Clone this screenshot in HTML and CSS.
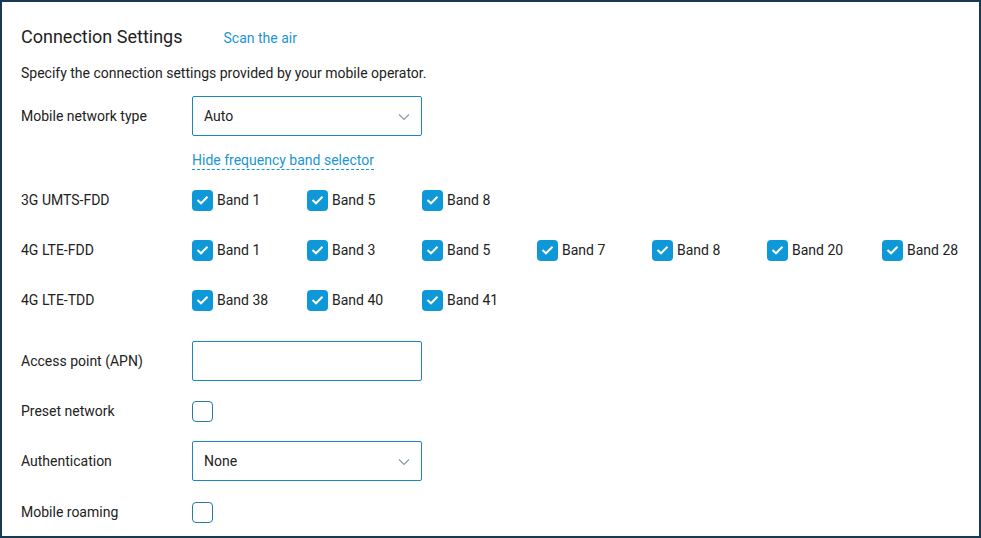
FILE: index.html
```html
<!DOCTYPE html>
<html>
<head>
<meta charset="utf-8">
<link rel="stylesheet" href="styles.css">
</head>
<body>
<div class="panel">
  <div class="header">
    <h1 class="title">Connection Settings</h1>
    <a class="scan">Scan the air</a>
  </div>
  <p class="desc">Specify the connection settings provided by your mobile operator.</p>

  <div class="row first">
    <div class="label">Mobile network type</div>
    <div class="select"><span>Auto</span>
      <svg class="chev" width="12" height="8" viewBox="0 0 12 8"><path d="M1 1.5 L6 6.5 L11 1.5" fill="none" stroke="#8a99a6" stroke-width="1.2"/></svg>
    </div>
  </div>

  <div class="linkrow"><a class="dashlink">Hide frequency band selector</a></div>

  <div class="bands">
    <div class="bandrow">
      <div class="label">3G UMTS-FDD</div>
      <div class="checks">
        <label class="chk"><span class="box on"><svg width="13" height="10" viewBox="0 0 13 10"><path d="M1.5 5 L5 8.3 L11.5 1.7" fill="none" stroke="#fff" stroke-width="2"/></svg></span>Band 1</label>
        <label class="chk"><span class="box on"><svg width="13" height="10" viewBox="0 0 13 10"><path d="M1.5 5 L5 8.3 L11.5 1.7" fill="none" stroke="#fff" stroke-width="2"/></svg></span>Band 5</label>
        <label class="chk"><span class="box on"><svg width="13" height="10" viewBox="0 0 13 10"><path d="M1.5 5 L5 8.3 L11.5 1.7" fill="none" stroke="#fff" stroke-width="2"/></svg></span>Band 8</label>
      </div>
    </div>
    <div class="bandrow">
      <div class="label">4G LTE-FDD</div>
      <div class="checks">
        <label class="chk"><span class="box on"><svg width="13" height="10" viewBox="0 0 13 10"><path d="M1.5 5 L5 8.3 L11.5 1.7" fill="none" stroke="#fff" stroke-width="2"/></svg></span>Band 1</label>
        <label class="chk"><span class="box on"><svg width="13" height="10" viewBox="0 0 13 10"><path d="M1.5 5 L5 8.3 L11.5 1.7" fill="none" stroke="#fff" stroke-width="2"/></svg></span>Band 3</label>
        <label class="chk"><span class="box on"><svg width="13" height="10" viewBox="0 0 13 10"><path d="M1.5 5 L5 8.3 L11.5 1.7" fill="none" stroke="#fff" stroke-width="2"/></svg></span>Band 5</label>
        <label class="chk"><span class="box on"><svg width="13" height="10" viewBox="0 0 13 10"><path d="M1.5 5 L5 8.3 L11.5 1.7" fill="none" stroke="#fff" stroke-width="2"/></svg></span>Band 7</label>
        <label class="chk"><span class="box on"><svg width="13" height="10" viewBox="0 0 13 10"><path d="M1.5 5 L5 8.3 L11.5 1.7" fill="none" stroke="#fff" stroke-width="2"/></svg></span>Band 8</label>
        <label class="chk"><span class="box on"><svg width="13" height="10" viewBox="0 0 13 10"><path d="M1.5 5 L5 8.3 L11.5 1.7" fill="none" stroke="#fff" stroke-width="2"/></svg></span>Band 20</label>
        <label class="chk"><span class="box on"><svg width="13" height="10" viewBox="0 0 13 10"><path d="M1.5 5 L5 8.3 L11.5 1.7" fill="none" stroke="#fff" stroke-width="2"/></svg></span>Band 28</label>
      </div>
    </div>
    <div class="bandrow">
      <div class="label">4G LTE-TDD</div>
      <div class="checks">
        <label class="chk"><span class="box on"><svg width="13" height="10" viewBox="0 0 13 10"><path d="M1.5 5 L5 8.3 L11.5 1.7" fill="none" stroke="#fff" stroke-width="2"/></svg></span>Band 38</label>
        <label class="chk"><span class="box on"><svg width="13" height="10" viewBox="0 0 13 10"><path d="M1.5 5 L5 8.3 L11.5 1.7" fill="none" stroke="#fff" stroke-width="2"/></svg></span>Band 40</label>
        <label class="chk"><span class="box on"><svg width="13" height="10" viewBox="0 0 13 10"><path d="M1.5 5 L5 8.3 L11.5 1.7" fill="none" stroke="#fff" stroke-width="2"/></svg></span>Band 41</label>
      </div>
    </div>
  </div>

  <div class="rows">
    <div class="row">
      <div class="label">Access point (APN)</div>
      <div class="input"></div>
    </div>
    <div class="row">
      <div class="label">Preset network</div>
      <span class="box off"></span>
    </div>
    <div class="row">
      <div class="label">Authentication</div>
      <div class="select"><span>None</span>
        <svg class="chev" width="12" height="8" viewBox="0 0 12 8"><path d="M1 1.5 L6 6.5 L11 1.5" fill="none" stroke="#8a99a6" stroke-width="1.2"/></svg>
      </div>
    </div>
    <div class="row last">
      <div class="label">Mobile roaming</div>
      <span class="box off"></span>
    </div>
  </div>
</div>
</body>
</html>
```

FILE: styles.css
```css
* { box-sizing: border-box; }
html, body { margin: 0; padding: 0; background: #fff; }
body {
  font-family: Roboto, "Liberation Sans", Arial, sans-serif;
  font-size: 14px;
  color: #222;
}
.panel {
  width: 981px;
  height: 538px;
  border: 2px solid #163a52;
  padding: 20px 19px 0 19px;
  overflow: hidden;
}
.header {
  display: flex;
  align-items: baseline;
  height: 30px;
  line-height: 30px;
}
.title {
  margin: 0;
  font-size: 18px;
  font-weight: 400;
  color: #1e1e1e;
}
.scan {
  margin-left: 41px;
  color: #1b96d2;
  font-size: 14px;
}
.desc {
  margin: 11px 0 0 0;
  line-height: 20px;
}
.row {
  display: flex;
  align-items: center;
  height: 40px;
}
.row.first { margin-top: 13px; }
.row.last { margin-top: 1px; }
.label {
  width: 171px;
  flex: none;
}
.select, .input {
  width: 230px;
  height: 40px;
  border: 1px solid #1d86bd;
  border-radius: 2px;
  display: flex;
  align-items: center;
  justify-content: space-between;
  padding: 0 11px 0 11px;
}
.chev { margin-top: 1px; }
.linkrow {
  margin-top: 14px;
  padding-left: 171px;
  line-height: 20px;
}
.dashlink {
  color: #1b96d2;
  border-bottom: 1px dashed #1b96d2;
  padding-bottom: 1px;
}
.bands {
  margin-top: 10px;
  display: flex;
  flex-direction: column;
  gap: 10px;
}
.bandrow {
  display: flex;
  align-items: center;
  height: 40px;
}
.checks {
  display: flex;
  align-items: center;
}
.chk {
  width: 115px;
  display: flex;
  align-items: center;
  gap: 4px;
}
.box {
  width: 21px;
  height: 21px;
  border-radius: 4px;
  flex: none;
  display: flex;
  align-items: center;
  justify-content: center;
}
.box.on { background: #0f98d8; }
.box.off { border: 1px solid #2a7aa3; }
.rows {
  margin-top: 21px;
  display: flex;
  flex-direction: column;
  gap: 10px;
}
```
